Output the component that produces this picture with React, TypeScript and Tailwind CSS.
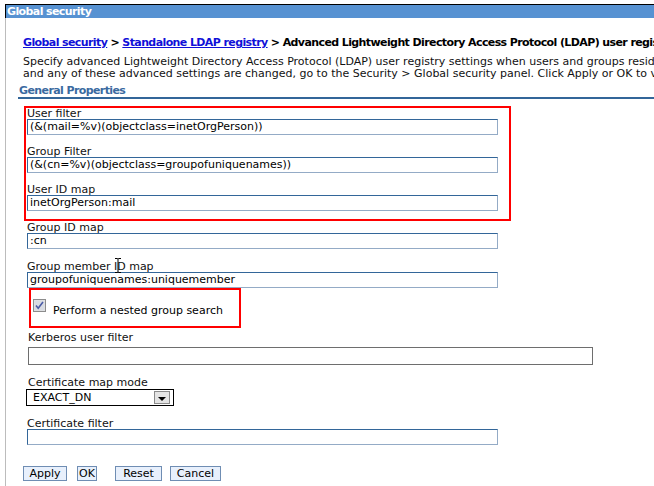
import type { ReactNode } from "react"

const labelCls = "h-[11px] pl-[1px] leading-[11px] whitespace-nowrap text-[#111]"

const Field = ({ label, value, className = "" }: { label: string, value?: string, className?: string }) => (
  <div className={className}>
    <div className={labelCls}>{label}</div>
    <div className="ml-[1px] h-[16px] w-[471px] border border-t-[#336699] border-l-[#336699] border-b-[#94abc6] border-r-[#94abc6] bg-white pl-[2px] leading-[14px] whitespace-nowrap">
      {value}
    </div>
  </div>
)

const Btn = ({ children, className = "" }: { children: ReactNode, className?: string }) => (
  <div className={`h-[15px] border border-[#6f8db3] bg-[#e8f0fc] text-center leading-[13px] ${className}`}>
    {children}
  </div>
)

const CheckBox = () => (
  <svg width="13" height="13" viewBox="0 0 13 13">
    <rect x="0.5" y="0.5" width="12" height="12" fill="#e2e2e2" stroke="#8c8c8c" />
    <rect x="1.5" y="1.5" width="10" height="10" fill="#d8dbe2" />
    <path d="M3 6.5 L5.2 9.2 L10 3" fill="none" stroke="#4a5aa6" strokeWidth="1.6" />
  </svg>
)

const TextCursor = () => (
  <svg width="8" height="17" viewBox="0 0 8 17" className="absolute left-[114px] top-[257px]">
    <path d="M1 1.5h2.5l.5.6.5-.6H7M4 2v13M1 15.5h2.5l.5-.6.5.6H7" fill="none" stroke="#000" strokeWidth="1" />
  </svg>
)

export default function App() {
  return (
    <div className="relative w-[654px] h-[486px] overflow-hidden bg-white pt-1 pl-[5px] font-['DejaVu_Sans',sans-serif] text-[11px] text-black">
      <div className="h-[14px] border-t border-l border-black bg-[#5792d2] pl-[1px] font-bold leading-[13px] tracking-[-0.6px] text-white whitespace-nowrap">
        Global security
      </div>

      <div className="h-[468px] border-l border-[#bcbcbc] pt-[18px]">
        <div className="ml-[17px] font-bold leading-[13px] tracking-[-0.6px] whitespace-nowrap">
          <a className="text-[#1010d8] underline">Global security</a>
          {" > "}
          <a className="text-[#1010d8] underline">Standalone LDAP registry</a>
          {" > Advanced Lightweight Directory Access Protocol (LDAP) user registry"}
        </div>

        <div className="mt-[7px] ml-[17px] leading-[12px] whitespace-nowrap text-[#111]">
          <div>Specify advanced Lightweight Directory Access Protocol (LDAP) user registry settings when users and groups reside in an external LDAP directory. When security is enabled</div>
          <div>and any of these advanced settings are changed, go to the Security &gt; Global security panel. Click Apply or OK to validate the changes.</div>
        </div>

        <div className="mt-[5px] ml-[12px] border-b-2 border-[#336699] pl-[1px] font-bold leading-[12px] tracking-[-0.6px] text-[#3a6a9f]">
          General Properties
        </div>

        <div className="ml-[18px] mt-[7px]">
          <div className="w-[487px] border-2 border-[#ff0000] pb-[8px]">
            <Field label="User filter" value="(&(mail=%v)(objectclass=inetOrgPerson))" />
            <Field className="mt-[11px]" label="Group Filter" value="(&(cn=%v)(objectclass=groupofuniquenames))" />
            <Field className="mt-[11px]" label="User ID map" value="inetOrgPerson:mail" />
          </div>

          <div className="ml-[2px]">
            <Field className="mt-[1px]" label="Group ID map" value=":cn" />
            <Field className="mt-[12px]" label="Group member ID map" value="groupofuniquenames:uniquemember" />
          </div>

          <div className="ml-[5px] flex h-[40px] w-[212px] items-start border-2 border-[#ff0000]">
            <div className="ml-[2px] mt-[9px]">
              <CheckBox />
            </div>
            <div className="ml-[7px] mt-[15px] leading-[11px] whitespace-nowrap">Perform a nested group search</div>
          </div>

          <div className="ml-[3px] mt-[4px]">
            <div className={labelCls}>Kerberos user filter</div>
            <div className="ml-[1px] mt-[4px] h-[18px] w-[565px] border border-[#6e6e6e] bg-white" />
          </div>

          <div className="ml-[3px] mt-[12px]">
            <div className={labelCls}>Certificate map mode</div>
            <div className="-ml-[1px] mt-[1px] flex h-[17px] w-[148px] items-center justify-between border border-black bg-white pl-[6px] pr-[3px]">
              <span className="leading-[13px]">EXACT_DN</span>
              <div className="flex h-[13px] w-[16px] items-end justify-center border border-[#8a8a8a] bg-[#e4e4e4] pb-[2px]">
                <div className="h-0 w-0 border-x-[4px] border-t-[4px] border-x-transparent border-t-black" />
              </div>
            </div>
          </div>

          <Field className="ml-[2px] mt-[12px]" label="Certificate filter" />

          <div className="-ml-[1px] mt-[21px] flex">
            <Btn className="w-[44px]">Apply</Btn>
            <Btn className="ml-[10px] w-[20px]">OK</Btn>
            <Btn className="ml-[18px] w-[47px]">Reset</Btn>
            <Btn className="ml-[8px] w-[51px]">Cancel</Btn>
          </div>
        </div>
      </div>

      <TextCursor />
    </div>
  )
}
